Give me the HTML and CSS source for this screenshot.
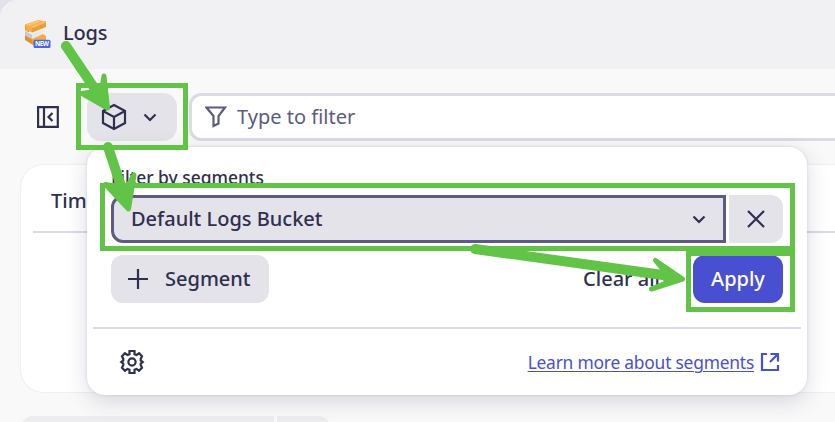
FILE: index.html
```html
<!DOCTYPE html>
<html lang="en">
<head>
<meta charset="utf-8">
<title>Logs</title>
<link rel="stylesheet" href="styles.css">
</head>
<body>
<div class="app">
  <header class="header">
    <svg class="logo" width="30" height="30" viewBox="0 0 30 30">
      <path fill="#e58f2c" d="M2 4.500L6 7v5.500L2 10zM2 15l8 4v6l-8-5z"/>
      <path fill="#f5ad4b" d="M2 4.500L15 0l8 1.500v5L9 12.500 3 10z"/>
      <path fill="#ee9c39" d="M9 7l14-5v5L9 12.500z"/>
      <path fill="#ffc36d" d="M3 4.500L15 .500l3 1L6 6zM8 6.500l12-5 3 1L10 8z"/>
      <path fill="#e9e8e5" d="M2 11l7 3 10-4 1 3-11 6-7-4z"/>
      <path fill="#c9c8c6" d="M2 11l7 4v4l-7-4z"/>
      <path fill="#f4aa47" d="M9 19l11-5 3 2v5L10 25z"/>
      <rect x="10.500" y="19.700" width="17" height="8.300" rx="1.500" fill="#4766e8"/>
      <text class="logo-text" x="19" y="26.200" text-anchor="middle" textLength="14">NEW</text>
    </svg>
    <h1 class="title">Logs</h1>
  </header>
  <div class="toolbar">
    <svg class="panel-icon" width="22" height="22" viewBox="0 0 22 22"><path d="M1.100 1.100h19.700v19.700H1.100zM7 1v20M15.500 7l-4 4 4 4"/></svg>
    <button class="segment-toggle">
      <svg width="26" height="28" viewBox="0 0 26 28"><path d="M13 2l11 6v12l-11 6-11-6V8zM2 8l11 6 11-6M13 14v12"/></svg>
      <svg width="14" height="9" viewBox="0 0 14 9"><path d="M1.500 1.500L7 7l5.500-5.500"/></svg>
    </button>
    <div class="filter">
      <svg width="22" height="22" viewBox="0 0 22 22"><path d="M1.500 1.500h18.500L13.500 10v7.500l-5 2.500V10z"/></svg>
      <span class="filter-text">Type to filter</span>
    </div>
  </div>
  <main class="card"><div class="table-head">Timestamp</div></main>
  <div class="footer-bar"><span class="footer-main"></span><span class="footer-more"></span></div>

  <section class="popover">
    <div class="popover-body">
      <div class="label">Filter by segments</div>
      <div class="select-row">
        <div class="select">
          <span class="select-text">Default Logs Bucket</span>
          <svg width="14" height="9" viewBox="0 0 14 9"><path d="M1.500 1.500L7 7l5.500-5.500"/></svg>
        </div>
        <button class="remove"><svg width="20" height="20" viewBox="0 0 20 20"><path d="M2 2l16 16M18 2L2 18"/></svg></button>
      </div>
      <div class="actions">
        <button class="add"><svg width="20" height="20" viewBox="0 0 20 20"><path d="M10 0v20M0 10h20"/></svg><span class="add-text">Segment</span></button>
        <button class="clear">Clear all</button>
        <button class="apply"><span>Apply</span></button>
      </div>
    </div>
    <div class="popover-foot">
      <svg width="26" height="26" viewBox="0 0 26 26"><path d="M10.500 2h5v3.200l2 .9L20 4.300l3 3-1.300 2.600v1.600l2 1.500-2 1.500v1.600L23 18.700l-3 3-2.500-1.800-2 .9V24h-5v-3.200l-2-.9L6 21.700l-3-3 1.300-2.600v-1.600l-2-1.500 2-1.500V9.900L3 7.300l3-3 2.500 1.800 2-.9z"/><circle cx="13" cy="13" r="3.600"/></svg>
      <a class="learn"><span class="learn-text">Learn more about segments</span><svg width="20" height="20" viewBox="0 0 20 20"><path d="M7 2H2v16h16v-5M10.500 2H18v7.500M18 2l-8 8"/></svg></a>
    </div>
  </section>

  <svg class="annotations" width="835" height="422" viewBox="0 0 835 422">
    <g class="frames">
      <rect x="78.500" y="85.500" width="107" height="62"/>
      <rect x="102.500" y="185.500" width="690" height="63"/>
      <rect x="688.500" y="253.500" width="104" height="56"/>
      <path d="M686 251h109"/>
    </g>
    <g class="shafts"><path d="M66 46l35 52M108 147l16 48M475 249l195 27"/></g>
    <g class="heads">
      <path d="M107.500 108L82 93.500 97 91l5-3 2-12z"/>
      <path d="M128.500 209L105.500 184.500 119 187l9-2 6-10z"/>
      <path d="M682.500 279L655.500 260.500 666 273v10L651.500 289z"/>
    </g>
  </svg>
</div>
</body>
</html>
```
FILE: styles.css
```css
* { box-sizing: border-box; }
body { margin: 0; overflow: hidden; background: #e2e1ec; color: #2f2f4f; font-family: "Noto Sans", sans-serif; font-size: 20px; font-weight: 500; line-height: 28px; }
svg { display: block; flex: none; fill: none; stroke: currentColor; stroke-width: 2.2; }
button { display: flex; align-items: center; flex: none; border: 0; padding: 0; margin: 0; background: #e3e3e9; color: inherit; font: inherit; white-space: nowrap; }
.app { position: relative; width: 835px; height: 422px; overflow: hidden; background: #f9f9f9; border-top-left-radius: 18px; }
.header { display: flex; height: 69px; padding: 20px 0 0 23px; background: #f1f1f4; }
.logo { stroke: none; }
.logo-text { fill: #fff; font: 700 6.4px "Noto Sans", sans-serif; }
.title { margin: -1px 0 0 10px; font-size: 20px; font-weight: 500; line-height: 28px; letter-spacing: -.2px; }
.toolbar { display: flex; align-items: center; height: 72px; padding: 24px 0 0 37px; }
.segment-toggle { width: 90px; height: 48px; margin-left: 28px; padding-left: 14px; gap: 16px; border-radius: 14px; }
.filter { display: flex; align-items: center; flex: none; width: 700px; height: 48px; margin-left: 12px; padding-left: 13px; gap: 10px; border: 3px solid #dbdae6; border-radius: 12px; background: #fff; color: #5c5b80; font-weight: 400; }
.card { width: 860px; height: 227px; margin: 24px 0 0 21px; padding: 22px 12px; border-radius: 22px; background: #fff; box-shadow: 0 0 2px #0002; }
.table-head { height: 46px; padding-left: 18px; border-bottom: 2px solid #dbdae6; }
.footer-bar { display: flex; gap: 3px; height: 30px; margin: 24px 0 0 21px; }
.footer-main, .footer-more { background: #ededf0; }
.footer-main { width: 253px; border-radius: 12px 0 0; }
.footer-more { width: 53px; border-radius: 0 12px 0 0; }
.popover { position: absolute; left: 87px; top: 147px; width: 720px; height: 248px; padding: 0 6px; border-radius: 18px; background: #fff; box-shadow: 0 0 3px #2b2a5826, 0 6px 22px #2b2a582b; }
.popover-body { height: 182px; padding: 18px 18px 0; border-bottom: 2px solid #dbdae6; }
.label { height: 30px; line-height: 24px; font-size: 17.4px; }
.select-row { display: flex; gap: 3px; }
.select { display: flex; align-items: center; justify-content: space-between; width: 615px; height: 48px; padding: 0 17px; border: 3px solid #5c5b80; border-radius: 12px 0 0 12px; background: #e3e3e9; }
.remove { justify-content: center; width: 54px; height: 48px; border-radius: 0 12px 12px 0; }
.actions { display: flex; align-items: center; margin-top: 12px; }
.add { width: 158px; height: 48px; padding-left: 17px; gap: 17px; border-radius: 12px; }
.clear { margin-left: auto; background: none; }
.apply { justify-content: center; width: 90px; height: 48px; margin-left: 33px; border-radius: 12px; background: #494fd1; color: #fff; }
.popover-foot { display: flex; align-items: center; justify-content: space-between; height: 66px; padding: 0 21px 0 26px; }
.learn { display: flex; align-items: center; gap: 6px; color: #494fd1; font-size: 17.4px; font-weight: 400; letter-spacing: -.22px; }
.learn-text { text-decoration: underline; text-underline-offset: 2px; text-decoration-thickness: 1px; }
.annotations { position: absolute; left: 0; top: 0; stroke: #61c446; }
.frames { stroke-width: 5; }
.shafts { stroke-width: 10; stroke-linecap: round; }
.heads { fill: #61c446; stroke-width: 5; stroke-linejoin: round; }
```
